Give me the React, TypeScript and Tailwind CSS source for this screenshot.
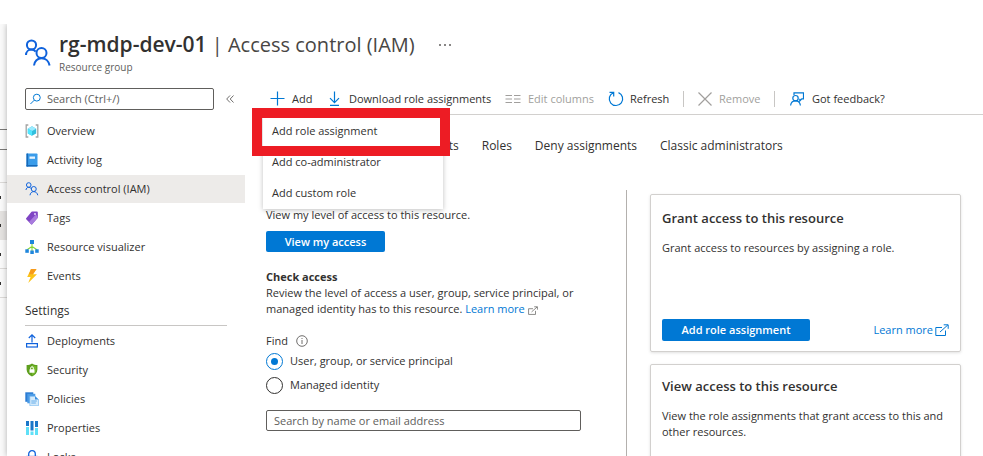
import type { ReactNode } from "react";

const PeopleIcon = ({ className }: { className: string }) => (
  <svg viewBox="0 0 26 28" className={className} fill="none" stroke="#0f62dc" strokeWidth="2" aria-hidden="true">
    <circle cx="6.500" cy="6" r="4.600" />
    <path d="M1 16c0-3 2.400-5.400 5.500-5.400 1.800 0 3.200.8 4.200 2" />
    <circle cx="16.500" cy="14" r="5" />
    <path d="M9 26.500c.4-4.200 3.500-7.300 7.500-7.300s7.300 3.100 8.100 7.300" />
  </svg>
);

const OverviewIcon = () => (
  <svg viewBox="0 0 14 14" className="size-3.5" aria-hidden="true">
    <path d="M3.300 1H1.200v12h2.100M10.700 1h2.100v12h-2.100" fill="none" stroke="#a3a3a3" strokeWidth="1.300" />
    <path d="M7 2.300l4.200 2.400v4.700L7 11.800 2.800 9.400V4.700z" fill="#32bedd" />
    <path d="M7 2.300l4.200 2.400L7 7 2.800 4.700z" fill="#9cebff" />
    <path d="M2.800 4.700L7 7v4.800L2.800 9.400z" fill="#50e6ff" />
  </svg>
);

const LogIcon = () => (
  <svg viewBox="0 0 14 14" className="size-3.5" aria-hidden="true">
    <rect x="1.500" y="0.500" width="11" height="13" rx="0.800" fill="#3a9cea" />
    <rect x="1.500" y="0.500" width="1.600" height="13" fill="#1769b8" />
    <path d="M1.500 12h11v.8a.7.7 0 0 1-.7.7H1.500z" fill="#1769b8" />
    <rect x="4.500" y="3.500" width="5.500" height="2.300" fill="#e6f4ff" />
  </svg>
);

const TagIcon = () => (
  <svg viewBox="0 0 14 14" className="size-3.5" aria-hidden="true">
    <path d="M7.200.5L12 .6a.8.8 0 0 1 .8.7l.1 5.100a1 1 0 0 1-.3.7L7.200 13.200a.8.8 0 0 1-1.100 0L1.200 8.300a.8.8 0 0 1 0-1.100L6.500.8z" fill="#7f45c4" />
    <path d="M4 11.100l6.900-7.500 2 2.300v.5a1 1 0 0 1-.3.7L7.200 13.200a.8.8 0 0 1-1.100 0z" fill="#a87bdd" />
    <circle cx="10" cy="3" r="0.900" fill="#f1e6ff" />
  </svg>
);

const VisualizerIcon = () => (
  <svg viewBox="0 0 14 14" className="size-3.5" aria-hidden="true">
    <path d="M7 3v9M2.300 11V9.500L7 6.500l4.700 3V11" fill="none" stroke="#86d633" strokeWidth="1.100" />
    <g fill="#1f86dc">
      <rect x="5" y="0" width="4" height="4" />
      <rect x="0.300" y="9.300" width="3.500" height="3.500" />
      <rect x="5.300" y="10.500" width="3.500" height="3.500" />
      <rect x="10.200" y="9.300" width="3.500" height="3.500" />
    </g>
  </svg>
);

const EventsIcon = () => (
  <svg viewBox="0 0 14 14" className="size-3.5" aria-hidden="true">
    <path d="M6 0h5.500L8 5.200h4L3.200 14l2.400-6H2.200z" fill="#fcc419" />
    <path d="M6 0h5.500L8 5.200H4z" fill="#f79a1c" />
  </svg>
);

const DeploymentsIcon = () => (
  <svg viewBox="0 0 14 14" className="size-3.5" fill="none" stroke="#0f62dc" strokeWidth="1.200" aria-hidden="true">
    <path d="M7 8.500V1M3.800 4L7 .9 10.200 4" />
    <rect x="1.600" y="9.600" width="10.800" height="3.400" />
  </svg>
);

const SecurityIcon = () => (
  <svg viewBox="0 0 14 14" className="size-3.5" aria-hidden="true">
    <path d="M7 .6c1.700 1.300 3.400 1.500 5.400 1.500v4.500c0 3.300-2.300 5.500-5.400 7-3.100-1.500-5.400-3.700-5.400-7V2.100C3.600 2.100 5.300 1.900 7 .6z" fill="#5e9f1e" />
    <path d="M7 1.900c1.400.9 2.700 1.200 4.300 1.300v3.500c0 2.500-1.800 4.400-4.300 5.700z" fill="#77b92d" />
    <path d="M5.600 6.500V5.200a1.400 1.400 0 0 1 2.800 0v1.300" fill="none" stroke="#fff" />
    <rect x="4.500" y="6.200" width="5" height="3.600" rx="0.400" fill="#fff" />
  </svg>
);

const PoliciesIcon = () => (
  <svg viewBox="0 0 14 14" className="size-3.5" aria-hidden="true">
    <path d="M.3.3h8v9.500h-8z" fill="#2b7cd3" />
    <path d="M2.300 1.800h8v9.500h-8z" fill="#4b9be6" />
    <path d="M4.800 4.300h5.300L13.500 7.500v6.200H4.800z" fill="#d5ebfb" stroke="#6cb1ee" strokeWidth="0.600" />
    <path d="M10 4.300v3.300h3.500z" fill="#3a8ee0" />
    <path d="M6.300 9h5.500M6.300 11h4.500" stroke="#58a5e8" strokeWidth="0.900" />
  </svg>
);

const PropertiesIcon = () => (
  <svg viewBox="0 0 14 14" className="size-3.5" aria-hidden="true">
    <path d="M1 0h3v5H1zM10 0h3v6h-3zM5.500 0h3v9.500h-3z" fill="#1a77c9" />
    <path d="M1 6h3v8H1zM10 7h3v7h-3zM5.500 10.500h3V14h-3z" fill="#5fe0f7" />
  </svg>
);

const LockIcon = () => (
  <svg viewBox="0 0 14 14" className="size-3.5" fill="none" stroke="#0f62dc" strokeWidth="1.300" aria-hidden="true">
    <path d="M3.700 6.500V4a3.300 3.300 0 0 1 6.600 0v2.500" />
    <rect x="2" y="6.500" width="10" height="7" />
  </svg>
);

const ExternalIcon = ({ className }: { className: string }) => (
  <svg viewBox="0 0 14 12" className={className} fill="none" stroke="currentColor" aria-hidden="true">
    <path d="M7 3.500H.8v8h9.700V6.500M5 8l7.800-7M8.700.8h4.500v4" />
  </svg>
);

type Item = { label: string; icon: ReactNode; active?: boolean };

const general: Item[] = [
  { label: "Overview", icon: <OverviewIcon /> },
  { label: "Activity log", icon: <LogIcon /> },
  { label: "Access control (IAM)", icon: <PeopleIcon className="size-3.5" />, active: true },
  { label: "Tags", icon: <TagIcon /> },
  { label: "Resource visualizer", icon: <VisualizerIcon /> },
  { label: "Events", icon: <EventsIcon /> },
];

const settings: Item[] = [
  { label: "Deployments", icon: <DeploymentsIcon /> },
  { label: "Security", icon: <SecurityIcon /> },
  { label: "Policies", icon: <PoliciesIcon /> },
  { label: "Properties", icon: <PropertiesIcon /> },
  { label: "Locks", icon: <LockIcon /> },
];

const NavList = ({ items }: { items: Item[] }) => (
  <ul className="flex flex-col gap-px">
    {items.map((item) => (
      <li key={item.label}>
        <a
          href="#"
          aria-current={item.active ? "page" : undefined}
          className={`flex h-7 items-center gap-2 pl-[18px] ${item.active ? "bg-[#edebe9]" : ""}`}
        >
          {item.icon}
          {item.label}
        </a>
      </li>
    ))}
  </ul>
);

const Dot = () => <div className="h-[3px] w-px bg-[#323130]" />;

const Strip = () => (
  <div className="flex w-[7px] shrink-0 flex-col bg-[#fafafa] pt-[105px]">
    <div className="h-[21px] border-y border-[#7a7977]" />
    <div className="h-[33px] border-b border-[#dcdad8]" />
    <div className="flex h-7 items-center"><Dot /></div>
    <div className="flex h-[29px] items-center bg-[#e4e2e0]"><Dot /></div>
    <div className="flex h-[29px] items-center border-b border-[#dcdad8]"><Dot /></div>
    <div className="flex h-[29px] items-center border-b border-[#dcdad8]"><Dot /></div>
  </div>
);

const Toolbar = () => (
  <div className="flex h-8 items-center border-b border-[#d2d0ce] whitespace-nowrap">
    <button type="button" className="flex w-[62px] items-center gap-[7px] pl-1">
      <svg viewBox="0 0 15 15" className="size-[15px]" stroke="#0078d4" strokeWidth="1.200" aria-hidden="true">
        <path d="M7.500 .5v14M.5 7.500h14" />
      </svg>
      Add
    </button>
    <button type="button" className="flex w-[177px] items-center gap-2">
      <svg viewBox="0 0 13 15" className="h-[15px] w-[13px]" fill="none" stroke="#0078d4" strokeWidth="1.200" aria-hidden="true">
        <path d="M6.500 .5v11M2 7.200l4.500 4.500L11 7.200M2 14.300h9" />
      </svg>
      Download role assignments
    </button>
    <button type="button" disabled className="flex w-[103px] items-center gap-[7px] text-[#a19f9d]">
      <svg viewBox="0 0 16 10" className="h-2.5 w-4" stroke="currentColor" aria-hidden="true">
        <path d="M.5 1.500h6.500M.5 5h6.500M.5 8.500h6.500M9 1.500h6.500M9 5h6.500M9 8.500h6.500" />
      </svg>
      Edit columns
    </button>
    <button type="button" className="flex w-[75px] items-center gap-1.5">
      <svg viewBox="0 0 16 16" className="size-4" fill="none" stroke="#0078d4" strokeWidth="1.200" aria-hidden="true">
        <path d="M10.500 1.600A6.700 6.700 0 1 1 5.200 1.700M1.500 1.300h4.200v4.200" />
      </svg>
      Refresh
    </button>
    <div className="h-4 w-px bg-[#c8c6c4]" />
    <button type="button" disabled className="flex w-[90px] items-center gap-[7px] pl-3.5 text-[#a19f9d]">
      <svg viewBox="0 0 14 14" className="size-3.5" stroke="currentColor" strokeWidth="1.200" aria-hidden="true">
        <path d="M.5.5l13 13M13.500.5l-13 13" />
      </svg>
      Remove
    </button>
    <div className="h-4 w-px bg-[#c8c6c4]" />
    <button type="button" className="flex items-center gap-2 pl-[15px]">
      <svg viewBox="0 0 14 14" className="size-3.5" fill="none" stroke="#0078d4" strokeWidth="1.200" aria-hidden="true">
        <path d="M4 3V.8h9.500v6h-1.700L9.800 9V6.800" />
        <circle cx="5.500" cy="6.200" r="2.700" />
        <path d="M.6 13.500c.3-2.800 2.300-4.600 4.900-4.600s4.600 1.800 4.900 4.600" />
      </svg>
      Got feedback?
    </button>
  </div>
);

const AddMenu = () => (
  <div className="absolute top-full -left-[3px] z-10 w-[180px] bg-white pb-px shadow-[0_1px_5px_rgba(0,0,0,0.25)]">
    <ul>
      {["Add role assignment", "Add co-administrator", "Add custom role"].map((label) => (
        <li key={label}>
          <button type="button" className="flex h-[31px] w-full items-center pl-[9px]">
            {label}
          </button>
        </li>
      ))}
    </ul>
    <div className="pointer-events-none absolute -top-[7px] -right-[7px] -left-[11px] h-12 border-10 border-[#ed1c24]" />
  </div>
);

const Radio = ({ label, checked }: { label: string; checked?: boolean }) => (
  <label className="flex h-6 items-center gap-[7px]">
    <input
      type="radio"
      name="principal"
      defaultChecked={checked}
      className="grid size-[17px] appearance-none place-items-center rounded-full border border-[#323130] before:size-[7px] before:rounded-full checked:border-[#0078d4] checked:before:bg-[#0078d4]"
    />
    {label}
  </label>
);

export default function App() {
  return (
    <div className="flex h-screen overflow-hidden bg-white pt-6 font-['Segoe_UI','Open_Sans',sans-serif] text-[11px] leading-4 text-[#323130]">
      <Strip />
      <div className="flex min-w-0 flex-1 flex-col bg-white shadow-[0_0_6px_rgba(0,0,0,0.3)] [clip-path:inset(0_0_0_-7px)]">
        <header className="flex h-[59px] items-start pl-[18px]">
          <PeopleIcon className="mt-[15px] h-7 w-[26px]" />
          <div className="ml-2 pt-2">
            <h1 className="text-[20px] leading-6 whitespace-nowrap text-[#484644]">
              <span className="text-[21px] font-semibold text-[#323130]">rg-mdp-dev-01</span> | Access control (IAM)
            </h1>
            <p className="pt-0.5 text-[10px] text-[#605e5c]">Resource group</p>
          </div>
          <button type="button" aria-label="More" className="mt-5 ml-6 flex gap-[3px]">
            <span className="size-0.5 rounded-full bg-[#605e5c]" />
            <span className="size-0.5 rounded-full bg-[#605e5c]" />
            <span className="size-0.5 rounded-full bg-[#605e5c]" />
          </button>
        </header>

        <div className="flex min-h-0 flex-1">
          <nav className="w-[238px] shrink-0">
            <div className="flex items-center gap-3 pt-[5px] pb-[7px] pl-[18px]">
              <label className="flex h-[22px] w-[189px] items-center gap-1.5 rounded-xs border border-[#605e5c] pl-1">
                <svg viewBox="0 0 12 12" className="size-3" fill="none" stroke="#0078d4" strokeWidth="1.100" aria-hidden="true">
                  <circle cx="7.500" cy="4.500" r="3.800" />
                  <path d="M4.700 7.300L.5 11.500" />
                </svg>
                <input type="text" aria-label="Search" placeholder="Search (Ctrl+/)" className="w-full min-w-0 outline-none placeholder:text-[#605e5c]" />
              </label>
              <button type="button" aria-label="Collapse menu">
                <svg viewBox="0 0 8 8" className="size-2" fill="none" stroke="#605e5c" strokeWidth="0.900" aria-hidden="true">
                  <path d="M4 .5L.7 4 4 7.500M7.500 .5L4.200 4l3.300 3.500" />
                </svg>
              </button>
            </div>
            <NavList items={general} />
            <h2 className="mt-[13px] mr-[18px] mb-px ml-[18px] h-[23px] border-b border-[#c8c6c4] text-[12px] font-medium">Settings</h2>
            <NavList items={settings} />
          </nav>

          <main className="flex min-w-0 flex-1 flex-col pl-[21px]">
            <div className="relative">
              <Toolbar />
              <AddMenu />
            </div>
            <div role="tablist" className="flex gap-[23px] pt-[23px] text-[12px] whitespace-nowrap">
              <button type="button" role="tab" className="w-[72px] text-left">Check access</button>
              <button type="button" role="tab">Role assignments</button>
              <button type="button" role="tab">Roles</button>
              <button type="button" role="tab">Deny assignments</button>
              <button type="button" role="tab">Classic administrators</button>
            </div>

            <div className="mt-9 flex min-h-0 flex-1">
              <section className="w-[361px] shrink-0 border-r border-[#b3b0ad]">
                <h3 className="font-semibold">My access</h3>
                <p className="pt-px">View my level of access to this resource.</p>
                <button type="button" className="mt-2 h-[21px] w-[119px] rounded-xs bg-[#0078d4] font-semibold text-white">
                  View my access
                </button>
                <h3 className="pt-[17px] font-bold">Check access</h3>
                <p className="w-[330px]">
                  Review the level of access a user, group, service principal, or managed identity has to this resource.{" "}
                  <a href="#" className="whitespace-nowrap text-[#0078d4]">
                    Learn more <ExternalIcon className="inline h-[9px] w-2.5 text-[#605e5c]" />
                  </a>
                </p>
                <fieldset>
                  <legend className="flex items-center gap-2 pt-4">
                    Find
                    <svg viewBox="0 0 12 12" className="size-3" fill="none" stroke="#605e5c" strokeWidth="0.900" aria-hidden="true">
                      <circle cx="6" cy="6" r="5.300" />
                      <path d="M6 5v4M6 3v1" />
                    </svg>
                  </legend>
                  <Radio label="User, group, or service principal" checked />
                  <Radio label="Managed identity" />
                </fieldset>
                <input
                  type="text"
                  aria-label="Search by name or email address"
                  placeholder="Search by name or email address"
                  className="mt-[13px] h-[21px] w-[315px] rounded-xs border border-[#605e5c] px-[7px] placeholder:text-[#605e5c]"
                />
              </section>

              <div className="flex min-w-0 flex-1 flex-col gap-3 pt-1 pr-[22px] pl-[23px]">
                <section className="flex h-[158px] shrink-0 flex-col rounded-xs border border-[#d2d0ce] px-[11px] pt-[15px] pb-2.5 shadow-[0_1px_3px_rgba(0,0,0,0.12)]">
                  <h2 className="text-[13px] font-semibold">Grant access to this resource</h2>
                  <p className="pt-3.5">Grant access to resources by assigning a role.</p>
                  <div className="mt-auto flex items-center justify-between">
                    <button type="button" className="h-[22px] w-[148px] rounded-xs bg-[#0078d4] font-semibold text-white">
                      Add role assignment
                    </button>
                    <a href="#" className="flex items-center gap-0.5 text-[#0078d4]">
                      Learn more <ExternalIcon className="h-3 w-3.5" />
                    </a>
                  </div>
                </section>
                <section className="flex h-[158px] shrink-0 flex-col rounded-xs border border-[#d2d0ce] px-[11px] pt-[13px] pb-2.5 shadow-[0_1px_3px_rgba(0,0,0,0.12)]">
                  <h2 className="text-[13px] font-semibold">View access to this resource</h2>
                  <p className="pt-3.5">View the role assignments that grant access to this and other resources.</p>
                </section>
              </div>
            </div>
          </main>
        </div>
      </div>
    </div>
  );
}
